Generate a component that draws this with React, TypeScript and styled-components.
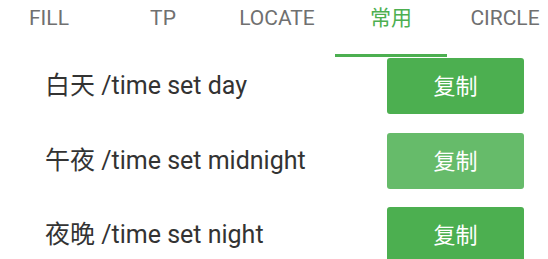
import React from "react";
import styled, { createGlobalStyle } from "styled-components";

const Global = createGlobalStyle`
  html, body { margin: 0; padding: 0; background: #ffffff; }
  body { font-family: Roboto, "Noto Sans CJK SC", sans-serif; overflow: hidden; }
`;

const Page = styled.div`
  width: 548px;
  height: 259px;
  overflow: hidden;
  background: #ffffff;
`;

const TabBar = styled.div`
  height: 57px;
  overflow: hidden;
`;

const TabStrip = styled.div`
  display: flex;
  margin-left: -8px;
  height: 100%;
`;

const Tab = styled.div<{ $active?: boolean }>`
  position: relative;
  flex: 0 0 114px;
  display: flex;
  justify-content: center;
  padding-top: 6px;
  box-sizing: border-box;
  font-size: 21px;
  line-height: 24px;
  color: ${(p) => (p.$active ? "#4caf50" : "#707070")};
  &::after {
    content: "";
    display: ${(p) => (p.$active ? "block" : "none")};
    position: absolute;
    left: 1px;
    right: 1px;
    bottom: 0;
    height: 3px;
    background: #4caf50;
  }
`;

const List = styled.div`
  display: flex;
  flex-direction: column;
  gap: 18.5px;
  padding-top: 1px;
`;

const Row = styled.div`
  display: flex;
  align-items: center;
  justify-content: space-between;
  padding: 0 24px 0 45px;
  height: 56px;
`;

const Label = styled.div`
  font-size: 25px;
  line-height: 30px;
  padding-bottom: 0px;
  color: #333333;
  white-space: nowrap;
`;

const CopyButton = styled.button<{ $pressed?: boolean }>`
  width: 137px;
  height: 56px;
  border: none;
  border-radius: 3px;
  background: ${(p) => (p.$pressed ? "#66bb6a" : "#4caf50")};
  color: #ffffff;
  font-family: Roboto, "Noto Sans CJK SC", sans-serif;
  font-size: 22px;
  padding: 0;
  padding-bottom: 4px;
`;

const tabs = ["FILL", "TP", "LOCATE", "常用", "CIRCLE"];
const items = [
  { label: "白天 /time set day", pressed: false },
  { label: "午夜 /time set midnight", pressed: true },
  { label: "夜晚 /time set night", pressed: false },
];

export default function App() {
  return (
    <Page>
      <Global />
      <TabBar>
        <TabStrip>
          {tabs.map((t) => (
            <Tab key={t} $active={t === "常用"}>
              {t}
            </Tab>
          ))}
        </TabStrip>
      </TabBar>
      <List>
        {items.map((it) => (
          <Row key={it.label}>
            <Label>{it.label}</Label>
            <CopyButton $pressed={it.pressed}>复制</CopyButton>
          </Row>
        ))}
      </List>
    </Page>
  );
}
